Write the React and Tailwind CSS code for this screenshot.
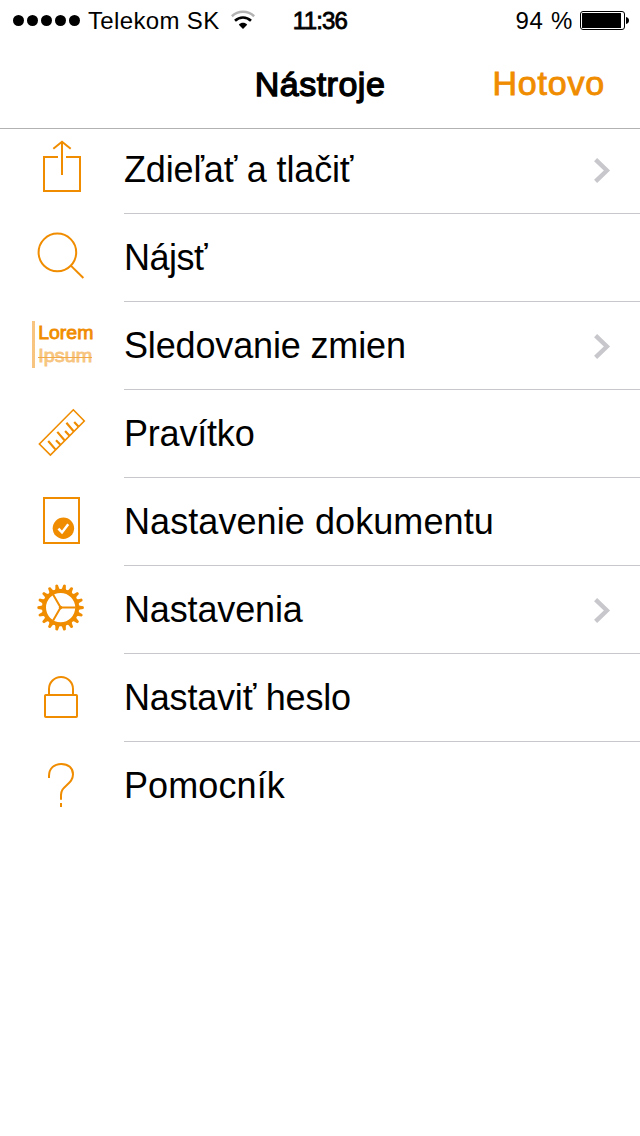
/**
 * Tools menu screen
 * Status bar, navigation bar and the list of document tools
 */

import React from 'react';

const GEAR_TEETH = Array.from({ length: 18 }, (_, i) => i * 20);

const ShareIcon = () => (
  <g>
    <path d="M58 31H44V65H80V31H66" />
    <path d="M62 49V16" />
    <path d="M53.3 22.8L62 15.8L70.7 22.8" />
  </g>
);

const SearchIcon = () => (
  <g>
    <circle cx="57.4" cy="38.4" r="18.8" />
    <path d="M70.8 51.6L83.4 64" />
  </g>
);

const ChangesIcon = () => (
  <g stroke="none" fill="#f08c00" fontSize="18.5">
    <rect x="32" y="19" width="3" height="47" fill="#f7c580" />
    <text x="38.2" y="37.4" textLength="55.2" lengthAdjust="spacingAndGlyphs" stroke="#f08c00" strokeWidth="0.8">Lorem</text>
    <text x="38.2" y="60.2" textLength="54" lengthAdjust="spacingAndGlyphs" fill="#f7c580" stroke="#f7c580" strokeWidth="0.8">Ipsum</text>
    <rect x="38" y="55" width="54" height="1" fill="#f2a94a" />
  </g>
);

const RulerIcon = () => (
  <g strokeWidth="1.6">
    <path d="M73.3 19.8L84.3 31L50.4 65L39.4 54Z" />
    <path d="M48.2 51L55.4 59.4M57.3 41.9L64.5 50.3M66.4 32.8L73.6 41.2" strokeWidth="2.2" />
    <path d="M56 50.2L60.2 54.6M65.1 41.1L69.3 45.5M74.2 32L78.4 36.4" strokeWidth="2.2" />
  </g>
);

const DocumentIcon = () => (
  <g>
    <rect x="44" y="20" width="35" height="45" />
    <circle cx="63.4" cy="50.3" r="10.7" fill="#f08c00" stroke="none" />
    <path d="M58.4 50.6L62 54.4L68.2 46.2" stroke="#fff" strokeWidth="2.5" />
  </g>
);

const GearIcon = () => (
  <g transform="translate(60.6 41.6)">
    <circle r="16.6" strokeWidth="4" />
    {GEAR_TEETH.map((angle) => (
      <path
        key={angle}
        d="M17.8 -2.7L19.4 -1.9L22.8 -1.3Q23.9 0 22.8 1.3L19.4 1.9L17.8 2.7Z"
        fill="#f08c00"
        stroke="none"
        transform={`rotate(${angle})`}
      />
    ))}
    <path d="M0 0H15M0 0L-7.5 -13M0 0L-7.5 13" strokeWidth="2" />
    <circle r="1.8" fill="#f08c00" stroke="none" />
  </g>
);

const LockIcon = () => (
  <g>
    <rect x="45" y="41" width="32" height="22" rx="0.8" />
    <path d="M49 41V35A12 12 0 0 1 73 35V41" />
  </g>
);

const HelpIcon = () => (
  <g>
    <path d="M49 36V34C49 26.5 54 21.9 61.3 21.9C68.4 21.9 73 26 73 32.2C73 37.5 70 40.2 66.4 43.4C63 46.5 61 48.5 61 53V57.7" />
    <path d="M61 61V65" />
  </g>
);

const tools = [
  { label: 'Zdieľať a tlačiť', icon: ShareIcon, arrow: true, spacing: 'tracking-[-0.15px]' },
  { label: 'Nájsť', icon: SearchIcon, spacing: 'tracking-[-0.5px]' },
  { label: 'Sledovanie zmien', icon: ChangesIcon, arrow: true, spacing: 'tracking-[-0.15px]' },
  { label: 'Pravítko', icon: RulerIcon, spacing: 'tracking-[-0.2px]' },
  { label: 'Nastavenie dokumentu', icon: DocumentIcon, spacing: 'tracking-[0.08px]' },
  { label: 'Nastavenia', icon: GearIcon, arrow: true, spacing: 'tracking-[-0.15px]' },
  { label: 'Nastaviť heslo', icon: LockIcon, spacing: 'tracking-[-0.2px]' },
  { label: 'Pomocník', icon: HelpIcon, spacing: 'tracking-[0.1px]' }
];

const StatusBar = () => (
  <div className="grid h-10 grid-cols-[1fr_auto_1fr] items-center text-2xl leading-[39px]">
    <div className="flex items-center pl-[13px]">
      <div className="flex gap-[3px]">
        {[0, 1, 2, 3, 4].map((dot) => (
          <span key={dot} className="size-[11px] rounded-full bg-black" />
        ))}
      </div>
      <span className="ml-2 pt-px whitespace-nowrap tracking-[0.35px]">Telekom SK</span>
      <svg className="ml-[11px] h-5 w-6 shrink-0" viewBox="0 0 24 20" fill="none" strokeWidth="2.6">
        <path d="M0.8 6.2C7 0.2 17 0.2 23.2 6.2" stroke="#b3b3b3" />
        <path d="M4 10.8C8.6 6.4 15.4 6.4 20 10.8" stroke="#000" />
        <path d="M7.8 14.8C10.2 12.2 13.8 12.2 16.2 14.8L12 19Z" fill="#000" stroke="none" />
      </svg>
    </div>
    <span className="pt-px tracking-[-0.8px] [-webkit-text-stroke:0.8px_black]">11:36</span>
    <div className="flex items-center justify-end pr-[11px]">
      <span className="mr-[7px] pt-px whitespace-nowrap tracking-[0.7px]">94 %</span>
      <svg className="h-5 w-[49px]" viewBox="0 0 49 20">
        <rect x="0.5" y="1.5" width="44" height="18" rx="2.5" fill="none" stroke="#000" />
        <rect x="2" y="3" width="39" height="15" rx="0.5" />
        <path d="M46 7C50 7.5 50 13.5 46 14Z" />
      </svg>
    </div>
  </div>
);

const ToolRow = ({ tool, last }) => {
  const Icon = tool.icon;

  return (
    <li className="flex h-[88px]">
      <svg className="h-[88px] w-[124px] shrink-0" viewBox="0 0 124 88" fill="none" stroke="#f08c00" strokeWidth="2">
        <Icon />
      </svg>
      <div className={`flex flex-1 items-center justify-between border-b pr-7 ${last ? 'border-transparent' : 'border-[#c8c7cc]'}`}>
        <span className={`pt-px text-[36px] leading-[86px] whitespace-nowrap ${tool.spacing}`}>{tool.label}</span>
        {tool.arrow && (
          <svg className="h-7 w-5" viewBox="0 0 20 28" fill="none" stroke="#c7c7cc" strokeWidth="4.4">
            <path d="M3.6 3.6L14.9 14.5L3.6 25.4" />
          </svg>
        )}
      </div>
    </li>
  );
};

const App = () => (
  <div className="h-[1136px] w-[640px] overflow-hidden bg-white font-['Liberation_Sans',Arial,sans-serif] text-black">
    <header className="h-[129px] border-b border-[#b2b2b2]">
      <StatusBar />
      <nav className="grid h-[88px] grid-cols-[1fr_auto_1fr] items-center text-[34px]">
        <h1 className="col-start-2 tracking-[0.5px] [-webkit-text-stroke:1.3px_black]">Nástroje</h1>
        <button className="justify-self-end pr-[35px] pb-0.5 tracking-[0.8px] text-[#f08c00] [-webkit-text-stroke:0.9px_#f08c00]">
          Hotovo
        </button>
      </nav>
    </header>

    {/* The first row starts under the bottom edge of the header */}
    <ul className="-mt-[3px]">
      {tools.map((tool, index) => (
        <ToolRow key={tool.label} tool={tool} last={index === tools.length - 1} />
      ))}
    </ul>
  </div>
);

export default App;
